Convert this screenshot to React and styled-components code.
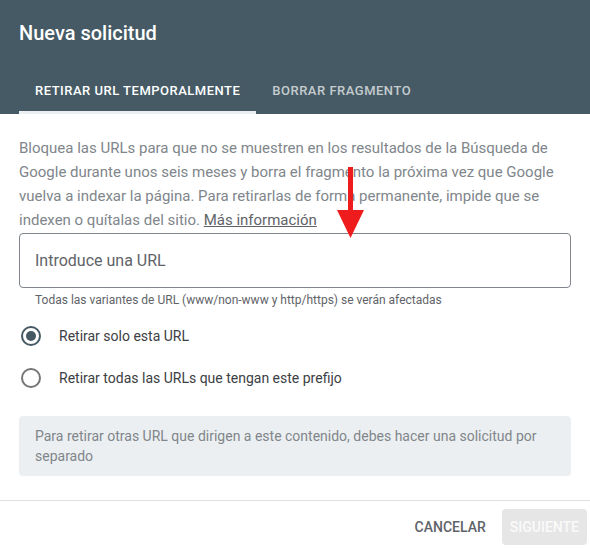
import React from "react";
import styled, { createGlobalStyle } from "styled-components";

const GlobalStyle = createGlobalStyle`
  html, body {
    margin: 0;
    padding: 0;
    background: #ffffff;
  }

  body {
    font-family: Roboto, "Liberation Sans", Arial, sans-serif;
    -webkit-font-smoothing: antialiased;
  }
`;

const Dialog = styled.div`
  position: relative;
  width: 590px;
  height: 548px;
  display: flex;
  flex-direction: column;
  background: #ffffff;
  overflow: hidden;
`;

const Header = styled.header`
  background: #455a64;
  padding: 19px 19px 0 19px;
  display: flex;
  flex-direction: column;
`;

const Title = styled.h1`
  margin: 0;
  font-size: 20px;
  line-height: 28px;
  font-weight: 500;
  color: #ffffff;
`;

const Tabs = styled.nav`
  display: flex;
  margin-top: 19px;
`;

const Tab = styled.div`
  height: 48px;
  box-sizing: border-box;
  padding: 3px 16px 0 16px;
  display: flex;
  align-items: center;
  font-size: 13px;
  font-weight: 500;
  letter-spacing: 0.5px;
  text-transform: uppercase;
  color: ${({ $active }) => ($active ? "#ffffff" : "rgba(255, 255, 255, 0.7)")};
  border-bottom: 3px solid ${({ $active }) => ($active ? "#eceff1" : "transparent")};
`;

const Body = styled.section`
  padding: 22px 19px 0 19px;
  display: flex;
  flex-direction: column;
`;

const Intro = styled.p`
  margin: 0;
  font-size: 15px;
  line-height: 24px;
  color: #80868b;
`;

const MoreLink = styled.a`
  color: #5f6368;
  text-decoration: underline;
`;

const UrlField = styled.div`
  margin-top: 1px;
  height: 55px;
  box-sizing: border-box;
  border: 1px solid #80868b;
  border-radius: 4px;
  display: flex;
  align-items: center;
  padding: 0 15px;
  font-size: 16px;
  color: #5f6368;
`;

const Helper = styled.div`
  margin-top: 4px;
  padding-left: 16px;
  font-size: 12px;
  line-height: 16px;
  color: #5f6368;
`;

const RadioGroup = styled.div`
  margin-top: 7px;
  display: flex;
  flex-direction: column;
`;

const RadioRow = styled.label`
  height: 42px;
  display: flex;
  align-items: center;
  gap: 18px;
  padding-left: 2px;
  font-size: 14px;
  color: #3c4043;
`;

const RadioMark = styled.span`
  width: 20px;
  height: 20px;
  box-sizing: border-box;
  border-radius: 50%;
  border: 2px solid ${({ $checked }) => ($checked ? "#455a64" : "#757575")};
  display: flex;
  align-items: center;
  justify-content: center;

  &::after {
    content: "";
    width: 10px;
    height: 10px;
    border-radius: 50%;
    background: #455a64;
    display: ${({ $checked }) => ($checked ? "block" : "none")};
  }
`;

const Notice = styled.div`
  margin-top: 17px;
  padding: 10px 16px;
  background: #eceff1;
  border-radius: 4px;
  font-size: 14px;
  line-height: 20px;
  color: #80868b;
`;

const Footer = styled.footer`
  margin-top: 24px;
  border-top: 1px solid #e0e0e0;
  padding: 8px 3px 3px 0;
  display: flex;
  justify-content: flex-end;
  gap: 8px;
`;

const Button = styled.button`
  height: 36px;
  padding: 0 8px;
  border: none;
  border-radius: 4px;
  font-family: inherit;
  font-size: 14px;
  font-weight: 500;
  text-transform: uppercase;
  background: ${({ $disabled }) => ($disabled ? "#e6e6e6" : "transparent")};
  color: ${({ $disabled }) => ($disabled ? "#fafafa" : "#5f6368")};
`;

const Arrow = styled.svg`
  position: absolute;
  left: 336px;
  top: 167px;
`;

const App = () => (
  <>
    <GlobalStyle />
    <Dialog>
      <Header>
        <Title>Nueva solicitud</Title>
        <Tabs>
          <Tab $active>Retirar URL temporalmente</Tab>
          <Tab>Borrar fragmento</Tab>
        </Tabs>
      </Header>

      <Body>
        <Intro>
          Bloquea las URLs para que no se muestren en los resultados de la Búsqueda de
          Google durante unos seis meses y borra el fragmento la próxima vez que Google
          vuelva a indexar la página. Para retirarlas de forma permanente, impide que se
          indexen o quítalas del sitio. <MoreLink>Más información</MoreLink>
        </Intro>

        <UrlField>Introduce una URL</UrlField>
        <Helper>
          Todas las variantes de URL (www/non-www y http/https) se verán afectadas
        </Helper>

        <RadioGroup>
          <RadioRow>
            <RadioMark $checked />
            Retirar solo esta URL
          </RadioRow>
          <RadioRow>
            <RadioMark />
            Retirar todas las URLs que tengan este prefijo
          </RadioRow>
        </RadioGroup>

        <Notice>
          Para retirar otras URL que dirigen a este contenido, debes hacer una solicitud por
          separado
        </Notice>
      </Body>

      <Footer>
        <Button>Cancelar</Button>
        <Button $disabled>Siguiente</Button>
      </Footer>

      {/* red annotation arrow over the page */}
      <Arrow width="30" height="72" viewBox="0 0 30 72">
        <rect x="12" y="0" width="5" height="44" fill="#ee1c1c" />
        <polygon points="1,43 28,43 14.5,71" fill="#ee1c1c" />
      </Arrow>
    </Dialog>
  </>
);

export default App;
